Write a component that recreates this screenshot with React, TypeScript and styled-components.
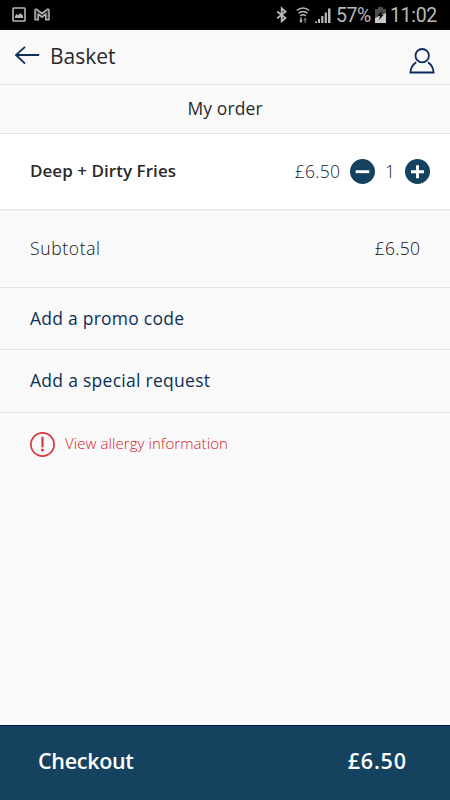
import React from 'react';
import styled, { createGlobalStyle } from 'styled-components';

const GlobalStyle = createGlobalStyle`
  * { box-sizing: border-box; }
  body { margin: 0; background: #f9f9f9; }
  button { border: 0; padding: 0; background: none; font: inherit; color: inherit; }
  svg { display: block; flex: none; }
`;

const navy = '#14425f';
const deep = '#0c3157';

const Screen = styled.div`
  display: flex;
  flex-direction: column;
  width: 450px;
  height: 800px;
  background: #f9f9f9;
  color: #292929;
  font-family: 'Open Sans', 'Noto Sans', sans-serif;
`;

const StatusBar = styled.div`
  display: flex;
  justify-content: space-between;
  height: 30px;
  padding: 0 13px 0 12px;
  background: #000;
  color: #b9b9b9;
  font-family: Roboto, sans-serif;
`;

const StatusGroup = styled.div<{ $gap: number }>`
  display: flex;
  align-items: center;
  gap: ${(p) => p.$gap}px;
  height: 29px;
`;

const StatusText = styled.span<{ $spacing: number }>`
  padding-top: 2px;
  font-size: 19.5px;
  line-height: 24px;
  letter-spacing: ${(p) => p.$spacing}px;
`;

const Label = styled.span<{ $size: number; $weight?: number; $spacing?: number; $color?: string }>`
  padding-bottom: 2px;
  font-size: ${(p) => p.$size}px;
  font-weight: ${(p) => p.$weight ?? 400};
  letter-spacing: ${(p) => p.$spacing ?? 0}px;
  margin-right: ${(p) => -(p.$spacing ?? 0)}px;
  color: ${(p) => p.$color ?? 'inherit'};
  line-height: 24px;
  white-space: nowrap;
`;

const Header = styled.header`
  display: flex;
  align-items: center;
  height: 55px;
  padding: 0 15px 0 14px;
  border-bottom: 1px solid #e2e2e2;
`;

const BackButton = styled.button`
  width: 25px;
  margin-right: 11px;
  padding-bottom: 2px;
`;

const AccountButton = styled.button`
  margin: 8px 0 0 auto;
`;

const SectionTitle = styled.div`
  display: flex;
  align-items: center;
  justify-content: center;
  height: 49px;
  border-bottom: 1px solid #e2e2e2;
`;

const Row = styled.div<{ $height: number; $white?: boolean }>`
  display: flex;
  align-items: center;
  justify-content: space-between;
  height: ${(p) => p.$height}px;
  padding: 0 30px;
  border-bottom: 1px solid #e2e2e2;
  background: ${(p) => (p.$white ? '#fff' : 'transparent')};
`;

const ItemRow = styled(Row)`
  padding-right: 20px;
  border-bottom: 2px solid #ececec;
`;

const Quantity = styled.div`
  display: flex;
  align-items: center;
  gap: 10px;
`;

const Count = styled.div`
  width: 10px;
  display: flex;
  justify-content: center;
`;

const Allergy = styled.div`
  display: flex;
  align-items: center;
  gap: 10px;
  padding: 18px 30px;
`;

const Checkout = styled.footer`
  display: flex;
  align-items: center;
  justify-content: space-between;
  height: 75px;
  margin-top: auto;
  padding: 0 44px 2px 38px;
  border-top: 1px solid #04134a;
  background: ${navy};
  color: #fff;
`;

const RoundButton = ({ plus }: { plus?: boolean }) => (
  <button aria-label={plus ? 'Increase' : 'Decrease'}>
    <svg width="25" height="25" viewBox="0 0 25 25">
      <circle cx="12.5" cy="12.5" r="12.5" fill={navy} />
      <path d={plus ? 'M6 12.7H19M12.5 6.2V19.2' : 'M5.7 12.7H19.3'} stroke="#fff" strokeWidth="2.9" />
    </svg>
  </button>
);

export default function App() {
  return (
    <Screen>
      <GlobalStyle />
      <StatusBar>
        <StatusGroup $gap={8}>
          <svg width="14" height="15" viewBox="0 0 14 15">
            <rect x="1" y="1" width="12" height="13" rx="0.7" fill="none" stroke="#b5b5b5" strokeWidth="1.6" />
            <path d="M3 11V9l1.5-2 1.4 1.2L8.5 6l1 1.7.8-.4L11 9v2z" fill="#b5b5b5" />
          </svg>
          <svg width="16" height="13" viewBox="0 0 16 13">
            <path
              d="M1 11.7V2.4Q1 .9 2.6 1.3L8 5.4 13.4 1.3Q15 .9 15 2.4V11.7H11.7V6.2L8 9.2 4.3 6.2V11.7Z"
              fill="#333"
              stroke="#b5b5b5"
              strokeWidth="1.5"
              strokeLinejoin="round"
            />
          </svg>
        </StatusGroup>
        <StatusGroup $gap={4}>
          <svg width="56" height="18" viewBox="0 0 56 18">
            <path d="M1.2 5.5 9.5 12 5.7 15.3V2.3L9.5 5.8 1.2 12.2" fill="none" stroke="#b9b9b9" strokeWidth="1.8" />
            <g fill="none" stroke="#b9b9b9" strokeWidth="1.5">
              <path d="M20.7 4.5Q27 -.4 33.3 4.5M22.6 7.2Q27 3.6 31.4 7.2M24.3 9.8Q27 7.8 29.7 9.8" />
            </g>
            <path d="M24.2 11.5h1.5v3H27l-2 2.6-2-2.6h1.2z" fill="#b9b9b9" />
            <path d="M28.4 17v-3h-1.2l2-2.7 2 2.7H30v3z" fill="#666" />
            <path
              d="M39 15.5h2V17h-2zM42 13h2v4h-2zM45.2 10h2.2v7h-2.2zM48.7 6.5h2.2V17h-2.2zM52 2.5h2.5V17H52z"
              fill="#b9b9b9"
            />
          </svg>
          <StatusText $spacing={-0.45}>57%</StatusText>
          <svg width="11" height="16" viewBox="0 0 11 16">
            <path d="M3 0h5v2h3v14H0V2h3z" fill="#4c4c4c" />
            <path d="M11 6V16H0V11z" fill="#c9c9c9" />
            <path d="M7 3.5 2.5 9H5l-1 4L8.7 7.7H6z" fill="#000" />
          </svg>
          <StatusText $spacing={-0.3}>11:02</StatusText>
        </StatusGroup>
      </StatusBar>

      <Header>
        <BackButton aria-label="Back">
          <svg width="26" height="20" viewBox="0 0 26 20">
            <path d="M25.2 9H2M11 .8 2 9l9 8.7" fill="none" stroke={deep} strokeWidth="1.8" />
          </svg>
        </BackButton>
        <Label $size={21}>Basket</Label>
        <AccountButton aria-label="Account">
          <svg width="26" height="26" viewBox="0 0 26 26">
            <g fill="none" stroke="#0d2a62" strokeWidth="1.8">
              <circle cx="13.2" cy="7.7" r="6.7" />
              <path d="M7.2 14.3Q1.8 18 1.4 24.5H24.6Q24.2 18 19 14.3" />
            </g>
          </svg>
        </AccountButton>
      </Header>

      <SectionTitle>
        <Label $size={17.5} $spacing={0.1}>My order</Label>
      </SectionTitle>

      <ItemRow $height={77} $white>
        <Label $size={17} $weight={600} $spacing={0.05}>Deep + Dirty Fries</Label>
        <Quantity>
          <Label $size={17.5} $weight={300} $spacing={0.3} $color="#172433">£6.50</Label>
          <RoundButton />
          <Count><Label $size={17.5} $weight={300} $color="#172433">1</Label></Count>
          <RoundButton plus />
        </Quantity>
      </ItemRow>

      <Row $height={77}>
        <Label $size={17.5} $weight={300} $spacing={0.65} $color="#111">Subtotal</Label>
        <Label $size={17.5} $weight={300} $spacing={0.3} $color="#111">£6.50</Label>
      </Row>
      <Row $height={62}>
        <Label $size={17.5} $spacing={0.24} $color={deep}>Add a promo code</Label>
      </Row>
      <Row $height={63}>
        <Label $size={17.5} $spacing={0.28} $color={deep}>Add a special request</Label>
      </Row>

      <Allergy>
        <svg width="25" height="25" viewBox="0 0 25 25">
          <circle cx="12.5" cy="12.5" r="11.6" fill="none" stroke="#d9363e" strokeWidth="1.7" />
          <path d="M12.5 5.7V14.5" stroke="#d9363e" strokeWidth="2.2" strokeLinecap="round" />
          <circle cx="12.5" cy="17.9" r="1.5" fill="#d9363e" />
        </svg>
        <Label $size={15} $weight={300} $spacing={0.08} $color="#d4202a">View allergy information</Label>
      </Allergy>

      <Checkout>
        <Label $size={21.5} $weight={600} $spacing={-0.3}>Checkout</Label>
        <Label $size={21.5} $weight={600} $spacing={0.8}>£6.50</Label>
      </Checkout>
    </Screen>
  );
}
